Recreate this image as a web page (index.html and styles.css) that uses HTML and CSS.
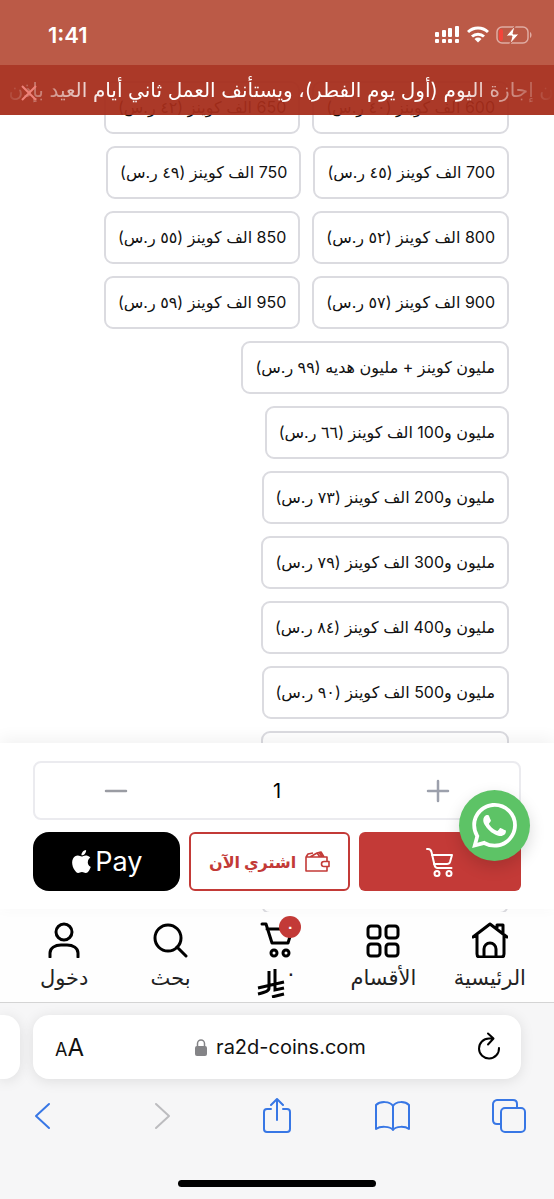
FILE: index.html
```html
<!DOCTYPE html>
<html lang="ar" dir="rtl">
<head>
  <meta charset="UTF-8">
  <meta name="viewport" content="width=device-width, initial-scale=1.0">
  <title>ra2d-coins.com</title>
  <link rel="stylesheet" href="styles.css">
</head>
<body>
  <header class="status-bar" dir="ltr">
    <span class="time">1:41</span>
    <div class="status-icons">
      <svg width="25" height="18" viewBox="0 0 25 18" fill="#fff">
        <rect x="0" y="6" width="4" height="5" rx="1"/><rect x="7" y="4" width="4" height="7" rx="1"/>
        <rect x="13" y="2" width="4" height="9" rx="1"/><rect x="20" y="0" width="4" height="11" rx="1"/>
        <rect x="0" y="13" width="4" height="4" rx="1"/><rect x="7" y="13" width="4" height="4" rx="1"/>
        <rect x="13" y="13" width="4" height="4" rx="1"/><rect x="20" y="13" width="4" height="4" rx="1"/>
      </svg>
      <svg width="22" height="17" viewBox="0 0 22 17" fill="none" stroke="#fff" stroke-width="3">
        <path d="M1 6a14.500 14.500 0 0 1 20 0M5 10.500a9 9 0 0 1 12 0"/>
        <path d="M11 16.500l-3.500-3.500a5 5 0 0 1 7 0z" fill="#fff" stroke="none"/>
      </svg>
      <svg width="36" height="18" viewBox="0 0 36 18">
        <rect x="1" y="1" width="31" height="16" rx="5" fill="none" stroke="#e0aca3" stroke-width="1.500"/>
        <path d="M34 6v6c2-1 2-5 0-6z" fill="#e0aca3"/>
        <rect x="3" y="3" width="4" height="12" rx="2" fill="#f4443a"/>
        <path d="M19 0L10 10h6l-2 8 9-10h-6z" fill="#fff" stroke="#bb5a47"/>
      </svg>
    </div>
  </header>

  <main class="page">
    <div class="ticker">
      <p class="ticker-text">ن إجازة اليوم (أول يوم الفطر)، ويستأنف العمل ثاني أيام العيد بإذن</p>
      <button class="ticker-close" aria-label="إغلاق">
        <svg width="16" height="16" viewBox="0 0 16 16" stroke="#ee8279" stroke-width="2"><path d="M1 1l14 14M15 1L1 15"/></svg>
      </button>
    </div>

    <form class="options">
      <label class="option"><input type="radio" name="coins">600 الف كوينز (٤٠ ر.س)</label>
      <label class="option"><input type="radio" name="coins">650 الف كوينز (٤٢ ر.س)</label>
      <label class="option"><input type="radio" name="coins">700 الف كوينز (٤٥ ر.س)</label>
      <label class="option"><input type="radio" name="coins">750 الف كوينز (٤٩ ر.س)</label>
      <label class="option"><input type="radio" name="coins">800 الف كوينز (٥٢ ر.س)</label>
      <label class="option"><input type="radio" name="coins">850 الف كوينز (٥٥ ر.س)</label>
      <label class="option"><input type="radio" name="coins">900 الف كوينز (٥٧ ر.س)</label>
      <label class="option"><input type="radio" name="coins">950 الف كوينز (٥٩ ر.س)</label>
      <label class="option"><input type="radio" name="coins">مليون كوينز + مليون هديه (٩٩ ر.س)</label>
      <label class="option"><input type="radio" name="coins">مليون و100 الف كوينز (٦٦ ر.س)</label>
      <label class="option"><input type="radio" name="coins">مليون و200 الف كوينز (٧٣ ر.س)</label>
      <label class="option"><input type="radio" name="coins">مليون و300 الف كوينز (٧٩ ر.س)</label>
      <label class="option"><input type="radio" name="coins">مليون و400 الف كوينز (٨٤ ر.س)</label>
      <label class="option"><input type="radio" name="coins">مليون و500 الف كوينز (٩٠ ر.س)</label>
      <label class="option"><input type="radio" name="coins">مليون و600 الف كوينز (٩٦ ر.س)</label>
      <label class="option"><input type="radio" name="coins">مليون و700 الف كوينز (٩٩ ر.س)</label>
      <label class="option"><input type="radio" name="coins">مليون و800 الف كوينز (٩٩ ر.س)</label>
    </form>

    <div class="dock">
      <section class="buy-sheet">
        <div class="quantity">
          <button aria-label="زيادة">
            <svg width="24" height="24" viewBox="0 0 24 24" stroke="#9ca0ac" stroke-width="2.500" stroke-linecap="round"><path d="M2 12h20M12 2v20"/></svg>
          </button>
          <input type="text" value="1" aria-label="الكمية">
          <button aria-label="إنقاص">
            <svg width="24" height="24" viewBox="0 0 24 24" stroke="#9a9ca3" stroke-width="2.500" stroke-linecap="round"><path d="M2 12h20"/></svg>
          </button>
        </div>
        <div class="actions">
          <button class="btn-cart" aria-label="أضف للسلة">
            <svg width="30" height="30" viewBox="0 0 30 30" fill="none" stroke="#fff" stroke-width="2" stroke-linecap="round" stroke-linejoin="round">
              <path d="M2 2h1c2 0 3 1 3.500 3l3 13c.5 2 1 3 3 3h14"/><path d="M7 8h20l-2 7c-.5 1.500-1 2-3 2H9"/>
              <circle cx="12" cy="26.500" r="2.500"/><circle cx="24" cy="26.500" r="2.500"/>
            </svg>
          </button>
          <button class="btn-buy">
            <svg width="26" height="22" viewBox="0 0 26 22" fill="none" stroke="#c33a37" stroke-width="1.600" stroke-linejoin="round">
              <path d="M23 11V6H2v14h21v-5M2 6l2-3 5-1M6 6l7-4 3 4M13 2l4-1 3 5M15 1l3 5"/>
              <path d="M25 10.500h-5a2.500 2.500 0 0 0 0 5h5z"/>
            </svg>
            <span>اشتري الآن</span>
          </button>
          <button class="btn-apple" dir="ltr" aria-label="Apple Pay">
            <svg width="23" height="23" viewBox="1 0 22 24" fill="#fff"><path d="M12.152 6.896c-.948 0-2.415-1.078-3.960-1.040-2.040.027-3.910 1.183-4.961 3.014-2.117 3.675-.546 9.103 1.519 12.090 1.013 1.454 2.208 3.090 3.792 3.039 1.520-.065 2.090-.987 3.935-.987 1.831 0 2.350.987 3.960.948 1.637-.026 2.676-1.480 3.676-2.948 1.156-1.688 1.636-3.325 1.662-3.415-.039-.013-3.182-1.221-3.220-4.857-.026-3.040 2.480-4.494 2.597-4.559-1.429-2.090-3.623-2.324-4.390-2.376-2-.156-3.675 1.090-4.610 1.090zM15.530 3.830c.843-1.012 1.400-2.427 1.245-3.830-1.207.052-2.662.805-3.532 1.818-.780.896-1.454 2.338-1.273 3.714 1.338.104 2.715-.688 3.559-1.701"/></svg>
            <span>Pay</span>
          </button>
        </div>
        <a class="whatsapp" href="#" aria-label="WhatsApp">
          <svg width="45" height="45" viewBox="0 0 24 24" fill="#fff"><path d="M17.472 14.382c-.297-.149-1.758-.867-2.030-.967-.273-.099-.471-.148-.670.150-.197.297-.767.966-.940 1.164-.173.199-.347.223-.644.075-.297-.150-1.255-.463-2.390-1.475-.883-.788-1.480-1.761-1.653-2.059-.173-.297-.018-.458.130-.606.134-.133.298-.347.446-.520.149-.174.198-.298.298-.497.099-.198.050-.371-.025-.520-.075-.149-.669-1.612-.916-2.207-.242-.579-.487-.500-.669-.510-.173-.008-.371-.010-.570-.010-.198 0-.520.074-.792.372-.272.297-1.040 1.016-1.040 2.479 0 1.462 1.065 2.875 1.213 3.074.149.198 2.096 3.200 5.077 4.487.709.306 1.262.489 1.694.625.712.227 1.360.195 1.871.118.571-.085 1.758-.719 2.006-1.413.248-.694.248-1.289.173-1.414-.074-.124-.272-.198-.570-.347m-5.421 7.403h-.004a9.870 9.870 0 0 1-5.031-1.378l-.361-.214-3.741.982.998-3.648-.235-.374a9.860 9.860 0 0 1-1.510-5.260c.001-5.450 4.436-9.884 9.888-9.884 2.640 0 5.122 1.030 6.988 2.898a9.825 9.825 0 0 1 2.893 6.994c-.003 5.450-4.437 9.884-9.885 9.884m8.413-18.297A11.815 11.815 0 0 0 12.050 0C5.495 0 .160 5.335.157 11.892c0 2.096.547 4.142 1.588 5.945L.057 24l6.305-1.654a11.882 11.882 0 0 0 5.683 1.448h.005c6.554 0 11.890-5.335 11.893-11.893a11.821 11.821 0 0 0-3.480-8.413z"/></svg>
        </a>
      </section>

      <nav class="tab-nav">
        <a href="#">
          <svg class="icon" viewBox="0 0 36 36"><path d="M1 15L18 2l17 13M5 13v19c0 2 1 3 3 3h21c2 0 3-1 3-3V13M25 7V3h6v9M12 34v-7a6 6 0 0 1 12 0v7"/></svg>
          <span>الرئيسية</span>
        </a>
        <a href="#">
          <svg class="icon" viewBox="0 0 36 36"><rect x="3" y="4" width="12" height="12" rx="3"/><rect x="21" y="4" width="12" height="12" rx="3"/><rect x="3" y="22" width="12" height="12" rx="3"/><rect x="21" y="22" width="12" height="12" rx="3"/></svg>
          <span>الأقسام</span>
        </a>
        <a href="#" class="nav-cart">
          <svg class="icon" viewBox="0 0 36 36"><path d="M3 2h4l6 19h16l4-13M8 7h20"/><circle cx="15" cy="31" r="3"/><circle cx="27" cy="31" r="3"/></svg>
          <b class="badge">٠</b>
          <span class="total" dir="ltr">
            <svg width="28" height="30" viewBox="0 0 28 30" fill="none" stroke="#000" stroke-width="3"><path d="M12 3v17c0 3-3 4-11 6M18 1v21l9-2M1 20l26-6M15 29l12-3"/></svg>
            <span>٠</span>
          </span>
        </a>
        <a href="#">
          <svg class="icon" viewBox="0 0 36 36"><circle cx="15" cy="16" r="13"/><path d="M24 25l9 9"/></svg>
          <span>بحث</span>
        </a>
        <a href="#">
          <svg class="icon" viewBox="0 0 36 36"><circle cx="18" cy="10" r="8"/><path d="M4 35v-4c0-5 5-8 11-8h6c6 0 11 3 11 8v4"/></svg>
          <span>دخول</span>
        </a>
      </nav>
    </div>
  </main>

  <footer class="browser" dir="ltr">
    <div class="tabs">
      <div class="tab-prev"></div>
      <div class="address">
        <button class="text-size" aria-label="Text size"><small>A</small>A</button>
        <div class="url">
          <svg width="12" height="17" viewBox="0 0 12 17"><rect y="7" width="12" height="10" rx="2" fill="#848487"/><path d="M2.500 8V4.500a3.500 3.500 0 0 1 7 0V8" fill="none" stroke="#848487" stroke-width="1.500"/></svg>
          <span>ra2d-coins.com</span>
        </div>
        <button aria-label="Reload">
          <svg width="24" height="28" viewBox="0 0 24 28" fill="none" stroke="#000" stroke-width="2" stroke-linecap="round" stroke-linejoin="round"><path d="M16 6.500h-4A10 10 0 1 0 22 16M11 1.500l5.500 5-5.500 6"/></svg>
        </button>
      </div>
    </div>
    <div class="toolbar">
      <button aria-label="Back"><svg viewBox="0 0 36 36"><path d="M25 6L12 18l13 12"/></svg></button>
      <button class="disabled" aria-label="Forward"><svg viewBox="0 0 36 36"><path d="M15 6l13 12-13 12"/></svg></button>
      <button aria-label="Share"><svg viewBox="0 0 36 36"><path d="M13 11H9c-2 0-3 1-3 3v17c0 2 1 3 3 3h20c2 0 3-1 3-3V14c0-2-1-3-3-3h-4M19 22V1M13 7l6-6 6 6"/></svg></button>
      <button aria-label="Bookmarks"><svg viewBox="0 0 36 36"><path d="M19 8c-3-5-13-5-17-1v24c4-3 14-3 17 1 3-4 12-4 16-1V7c-4-4-13-4-16 1zM19 8v24"/></svg></button>
      <button aria-label="Tabs"><svg viewBox="0 0 36 36"><rect x="10" y="10" width="24" height="24" rx="4"/><path d="M10 26H6c-2 0-4-1-4-4V6c0-2 2-4 4-4h16c3 0 4 2 4 4v4"/></svg></button>
    </div>
    <div class="home-indicator"></div>
  </footer>
</body>
</html>
```
FILE: styles.css
```css
* {
  box-sizing: border-box;
}

body {
  margin: 0;
  height: 100vh;
  display: flex;
  flex-direction: column;
  font-family: "Inter", "DejaVu Sans", sans-serif;
  color: #111;
  background: #fff;
}

button {
  border: none;
  background: none;
  padding: 0;
  font-family: inherit;
  color: inherit;
  cursor: pointer;
}

svg {
  flex-shrink: 0;
}

/* Status bar */
.status-bar {
  display: flex;
  justify-content: space-between;
  align-items: center;
  height: 65px;
  padding: 4px 22px 0 48px;
  background: #bb5a47;
  color: #fff;
}

.time {
  font-size: 22px;
  font-weight: 600;
}

.status-icons {
  display: flex;
  align-items: center;
  gap: 7px;
}

/* Page */
.page {
  position: relative;
  flex: 1;
  min-height: 0;
  overflow: hidden;
}

.ticker {
  position: absolute;
  top: 0;
  left: 0;
  right: 0;
  height: 50px;
  background: rgba(166, 45, 27, 0.94);
  color: #fff;
  overflow: hidden;
}

.ticker-text {
  margin: 0;
  font-size: 20px;
  line-height: 50px;
  white-space: nowrap;
  -webkit-mask-image: linear-gradient(to left, transparent, #000 100px, #000 calc(100% - 110px), transparent);
  mask-image: linear-gradient(to left, transparent, #000 100px, #000 calc(100% - 110px), transparent);
}

.ticker-close {
  position: absolute;
  left: 21px;
  top: 20px;
  line-height: 0;
}

.options {
  display: flex;
  flex-wrap: wrap;
  gap: 12px;
  padding: 16px 45px 0 33px;
}

.option {
  height: 53px;
  padding: 0 12px;
  border: 2px solid #dbdbe0;
  border-radius: 9px;
  font-size: 16px;
  line-height: 48px;
  white-space: nowrap;
  cursor: pointer;
}

.option input {
  position: absolute;
  opacity: 0;
}

/* Bottom dock */
.dock {
  position: absolute;
  left: 0;
  right: 0;
  bottom: 0;
  display: flex;
  flex-direction: column;
  gap: 3px;
}

.buy-sheet {
  position: relative;
  padding: 18px 33px;
  background: #fff;
  box-shadow: 0 -4px 16px rgba(0, 0, 0, 0.06);
}

.quantity {
  display: grid;
  grid-template-columns: 1fr 1fr 1fr;
  height: 59px;
  margin-bottom: 12px;
  border: 2px solid #ebebef;
  border-radius: 8px;
}

.quantity button {
  display: flex;
  align-items: center;
  justify-content: center;
}

.quantity input {
  width: 100%;
  border: none;
  background: none;
  text-align: center;
  font-family: inherit;
  font-size: 20px;
}

.actions {
  display: grid;
  grid-template-columns: 11fr 11fr 10fr;
  gap: 9px;
  height: 59px;
}

.actions button {
  display: flex;
  align-items: center;
  justify-content: center;
}

.btn-cart {
  background: #c33a37;
  border-radius: 6px;
}

.actions .btn-buy {
  gap: 8px;
  border: 2px solid #c33a37;
  border-radius: 6px;
  color: #c33a37;
  font-size: 16px;
  font-weight: bold;
}

.actions .btn-apple {
  gap: 2px;
  background: #000;
  border-radius: 16px;
  color: #fff;
  font-size: 27px;
}

.whatsapp {
  position: absolute;
  right: 24px;
  top: 47px;
  width: 71px;
  height: 71px;
  display: flex;
  align-items: center;
  justify-content: center;
  border-radius: 50%;
  background: #5dc366;
  box-shadow: 0 6px 16px rgba(0, 0, 0, 0.15);
}

.tab-nav {
  display: flex;
  height: 90px;
  padding: 10px 11px 0;
  background: #fefefe;
}

.tab-nav a {
  position: relative;
  flex: 1;
  display: flex;
  flex-direction: column;
  align-items: center;
  color: #222;
  font-size: 21px;
  line-height: 40px;
  text-decoration: none;
}

.icon {
  width: 36px;
  height: 36px;
  fill: none;
  stroke: #000;
  stroke-width: 3;
  stroke-linecap: round;
  stroke-linejoin: round;
}

.badge {
  position: absolute;
  top: -6px;
  right: 29px;
  width: 22px;
  height: 22px;
  border-radius: 50%;
  background: #c33a37;
  color: #fff;
  font-size: 13px;
  line-height: 22px;
  text-align: center;
}

.total {
  display: flex;
  padding-top: 10px;
  line-height: 12px;
}

/* Browser bar */
.browser {
  background: #f6f6f7;
  border-top: 1px solid #d4d4d4;
  padding-top: 12px;
}

.tabs {
  display: flex;
  gap: 13px;
  height: 64px;
  padding-right: 33px;
}

.tab-prev {
  width: 20px;
  background: #fff;
  border-radius: 0 16px 16px 0;
  box-shadow: 0 2px 14px rgba(0, 0, 0, 0.1);
}

.address {
  flex: 1;
  display: flex;
  align-items: center;
  justify-content: space-between;
  padding: 0 20px 0 22px;
  background: #fff;
  border-radius: 16px;
  box-shadow: 0 2px 14px rgba(0, 0, 0, 0.1);
}

.text-size {
  font-size: 24px;
}

.text-size small {
  font-size: 18px;
}

.url {
  display: flex;
  align-items: center;
  gap: 9px;
  font-size: 20px;
}

.toolbar {
  display: flex;
  justify-content: space-between;
  padding: 19px 27px 0 24px;
}

.toolbar button {
  width: 36px;
  height: 36px;
}

.toolbar svg {
  width: 36px;
  height: 36px;
  fill: none;
  stroke: #3877e5;
  stroke-width: 2;
  stroke-linecap: round;
  stroke-linejoin: round;
}

.toolbar .disabled svg {
  stroke: #bcbcbf;
}

.home-indicator {
  width: 198px;
  height: 7px;
  margin: 46px auto 12px;
  border-radius: 4px;
  background: #000;
}
```
